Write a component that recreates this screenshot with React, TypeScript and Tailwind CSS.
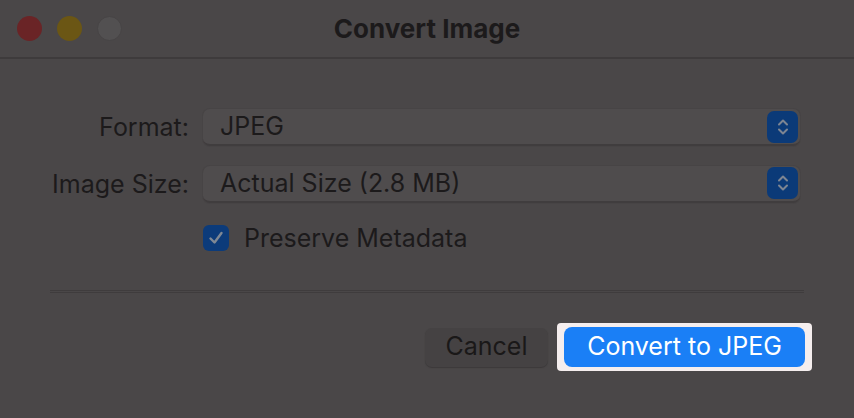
import React from 'react';

const font = { fontFamily: 'Inter, "Liberation Sans", Arial, sans-serif' };

const Stepper: React.FC = () => (
  <div className="flex h-[32px] w-[31px] items-center justify-center rounded-[7px] bg-[#0b3a78]">
    <svg width="14" height="22" viewBox="0 0 14 22" fill="none">
      <path d="M3 8.5 L7 4.5 L11 8.5" stroke="#7d8592" strokeWidth="2" strokeLinecap="round" strokeLinejoin="round" />
      <path d="M3 13.5 L7 17.5 L11 13.5" stroke="#7d8592" strokeWidth="2" strokeLinecap="round" strokeLinejoin="round" />
    </svg>
  </div>
);

const SelectRow: React.FC<{ label: string; value: string }> = ({ label, value }) => (
  <div className="flex items-center">
    <div className="w-[189px] text-right text-[25px] text-[#1c1a1b]">{label}</div>
    <div className="ml-[14px] flex h-[37px] w-[597px] items-center justify-between rounded-[7px] border-b-2 border-[#403d3e] bg-[#4f4c4d] pl-[17px] pr-[2px] shadow-[0_0_0_1px_#474445]">
      <span className="text-[25px] text-[#1c1a1b]">{value}</span>
      <Stepper />
    </div>
  </div>
);

export default function App() {
  return (
    <div className="flex h-[418px] w-[854px] flex-col bg-[#4a4748]" style={font}>
      {/* title bar */}
      <div className="relative flex h-[59px] items-center border-b-2 border-[#3e3b3c]">
        <div className="flex gap-[15px] pl-[17px]">
          <div className="h-[25px] w-[25px] rounded-full bg-[#6a2426]" />
          <div className="h-[25px] w-[25px] rounded-full bg-[#6b5614]" />
          <div className="h-[25px] w-[25px] rounded-full border border-[#474445] bg-[#525051]" />
        </div>
        <div className="absolute inset-x-0 text-center text-[26px] font-bold text-[#1c1a1b]">Convert Image</div>
      </div>

      {/* form */}
      <div className="flex flex-col pt-[50px]">
        <SelectRow label="Format:" value="JPEG" />
        <div className="h-[19px]" />
        <SelectRow label="Image Size:" value="Actual Size (2.8 MB)" />
        <div className="mt-[22px] flex h-[26px] items-center pl-[203px]">
          <div className="flex h-[26px] w-[26px] items-center justify-center rounded-[6px] bg-[#0c3b7a]">
            <svg width="18" height="18" viewBox="0 0 18 18" fill="none">
              <path d="M3.5 9.5 L7.5 13.5 L14.5 4" stroke="#7f8894" strokeWidth="2.4" strokeLinecap="round" strokeLinejoin="round" />
            </svg>
          </div>
          <span className="ml-[15px] text-[25px] leading-[26px] text-[#1c1a1b]">Preserve Metadata</span>
        </div>
      </div>

      <div className="mx-[50px] mt-[39px] h-[3px] border-y border-[#3f3c3d] bg-[#4a4748]" />

      {/* buttons */}
      <div className="mt-[30px] flex items-center justify-end gap-[9px] pr-[42px]">
        <div className="flex h-[39px] w-[123px] items-center justify-center rounded-[7px] bg-[#454243] text-[25px] text-[#1a1818] shadow-[0_1px_1px_#3c393a]">
          Cancel
        </div>
        <div className="rounded-[4px] bg-[#f5eeee] px-[7px] py-[4px]">
          <div className="flex h-[40px] w-[241px] items-center justify-center rounded-[8px] bg-[#1a7ff6] text-[25px] text-white">
            Convert to JPEG
          </div>
        </div>
      </div>
    </div>
  );
}
